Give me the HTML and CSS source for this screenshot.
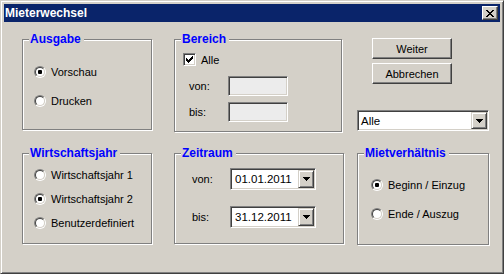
FILE: index.html
```html
<!DOCTYPE html>
<html>
<head>
<meta charset="utf-8">
<title>Mieterwechsel</title>
<link rel="stylesheet" href="styles.css">
</head>
<body>
<div class="window">
  <div class="titlebar">
    <span class="title">Mieterwechsel</span>
    <span class="close"><svg width="8" height="7" viewBox="0 0 8 7" shape-rendering="crispEdges"><path d="M0 0.5h2M6 0.5h2M1 1.5h2M5 1.5h2M2 2.5h4M3 3.5h2M2 4.5h4M1 5.5h2M5 5.5h2M0 6.5h2M6 6.5h2" stroke="#000" stroke-width="1"/></svg></span>
  </div>
  <div class="body">
    <div class="group g-ausgabe">
      <span class="legend">Ausgabe</span>
      <div class="opt"><span class="radio"><span class="radio-in"><span class="dot"></span></span></span><span>Vorschau</span></div>
      <div class="opt"><span class="radio"><span class="radio-in"></span></span><span>Drucken</span></div>
    </div>

    <div class="group g-bereich">
      <span class="legend">Bereich</span>
      <div class="chk-row"><span class="chk sunken"><svg width="7" height="7" viewBox="0 0 7 7" shape-rendering="crispEdges"><path d="M0.5 2v3M1.5 3v3M2.5 4v3M3.5 3v3M4.5 2v3M5.5 1v3M6.5 0v3" stroke="#000" stroke-width="1"/></svg></span><span>Alle</span></div>
      <div class="field"><span class="lbl">von:</span><span class="edit sunken"></span></div>
      <div class="field"><span class="lbl">bis:</span><span class="edit sunken"></span></div>
    </div>

    <div class="side">
      <div class="btn">Weiter</div>
      <div class="btn">Abbrechen</div>
      <div class="combo combo-wide sunken"><span class="combo-text">Alle</span><span class="dd"><svg width="7" height="4" viewBox="0 0 7 4" shape-rendering="crispEdges"><path d="M0 0.5h7M1 1.5h5M2 2.5h3M3 3.5h1" stroke="#000"/></svg></span></div>
    </div>

    <div class="group g-wj">
      <span class="legend">Wirtschaftsjahr</span>
      <div class="opt"><span class="radio"><span class="radio-in"></span></span><span>Wirtschaftsjahr 1</span></div>
      <div class="opt"><span class="radio"><span class="radio-in"><span class="dot"></span></span></span><span>Wirtschaftsjahr 2</span></div>
      <div class="opt"><span class="radio"><span class="radio-in"></span></span><span>Benutzerdefiniert</span></div>
    </div>

    <div class="group g-zeit">
      <span class="legend">Zeitraum</span>
      <div class="dfield"><span class="dlbl">von:</span><span class="combo combo-date sunken"><span class="combo-text">01.01.2011</span><span class="dd"><svg width="7" height="4" viewBox="0 0 7 4" shape-rendering="crispEdges"><path d="M0 0.5h7M1 1.5h5M2 2.5h3M3 3.5h1" stroke="#000"/></svg></span></span></div>
      <div class="dfield"><span class="dlbl">bis:</span><span class="combo combo-date sunken"><span class="combo-text">31.12.2011</span><span class="dd"><svg width="7" height="4" viewBox="0 0 7 4" shape-rendering="crispEdges"><path d="M0 0.5h7M1 1.5h5M2 2.5h3M3 3.5h1" stroke="#000"/></svg></span></span></div>
    </div>

    <div class="group g-miet">
      <span class="legend">Mietverhältnis</span>
      <div class="opt"><span class="radio"><span class="radio-in"><span class="dot"></span></span></span><span>Beginn / Einzug</span></div>
      <div class="opt"><span class="radio"><span class="radio-in"></span></span><span>Ende / Auszug</span></div>
    </div>
  </div>
</div>
</body>
</html>
```

FILE: styles.css
```css
html, body {
  margin: 0;
  padding: 0;
  background: #D4D0C8;
}
body {
  font-family: "Liberation Sans", Arial, sans-serif;
  font-size: 11px;
  color: #000;
}
.window {
  width: 504px;
  height: 274px;
  box-sizing: border-box;
  border: 1px solid;
  border-color: #D4D0C8 #404040 #404040 #D4D0C8;
  box-shadow: inset 1px 1px #fff, inset -1px -1px #808080;
  padding: 3px;
  background: #D4D0C8;
  display: flex;
  flex-direction: column;
}
.titlebar {
  height: 18px;
  flex: none;
  background: #0A246A;
  display: flex;
  align-items: center;
  justify-content: space-between;
  padding-left: 1px;
}
.title {
  color: #fff;
  font-weight: bold;
  font-size: 12px;
  line-height: 14px;
}
.close {
  width: 16px;
  height: 14px;
  box-sizing: border-box;
  margin-right: 2px;
  background: #D4D0C8;
  border: 1px solid;
  border-color: #fff #404040 #404040 #fff;
  box-shadow: inset -1px -1px #808080;
  display: flex;
  align-items: center;
  justify-content: center;
}
.close svg { display: block; }

.body {
  flex: 1;
  display: grid;
  grid-template-columns: 152px 183px 132px;
  grid-template-rows: 93px 92px;
  row-gap: 21px;
  padding: 17px 0 0 18px;
  align-items: start;
}

.group {
  position: relative;
  box-sizing: border-box;
  border: 1px solid #808080;
  box-shadow: inset 1px 1px #fff, 1px 1px #fff;
  display: flex;
  flex-direction: column;
  align-items: flex-start;
}
.legend {
  position: absolute;
  top: -8px;
  left: 6px;
  padding: 0 3px 0 1px;
  background: #D4D0C8;
  color: #0000FF;
  font-weight: bold;
  font-size: 12px;
  line-height: 14px;
  white-space: nowrap;
}

.g-ausgabe { width: 130px; height: 91px; padding: 23px 0 0 11px; gap: 12px; }
.g-bereich { width: 168px; height: 93px; padding: 13px 0 0 8px; }
.g-wj { width: 130px; height: 91px; padding: 12px 0 0 11px; gap: 7px; }
.g-zeit { width: 170px; height: 91px; padding: 14px 0 0 17px; gap: 16px; }
.g-miet { width: 132px; height: 92px; padding: 22px 0 0 13px; gap: 12px; }

.opt {
  display: flex;
  align-items: center;
  height: 17px;
  gap: 5px;
  white-space: nowrap;
}
.radio {
  width: 12px;
  height: 12px;
  box-sizing: border-box;
  border-radius: 50%;
  border: 1px solid;
  border-color: #808080 #fff #fff #808080;
  flex: none;
  display: flex;
}
.radio-in {
  flex: 1;
  border-radius: 50%;
  border: 1px solid;
  border-color: #404040 #D4D0C8 #D4D0C8 #404040;
  background: #fff;
  display: flex;
  align-items: center;
  justify-content: center;
}
.dot {
  width: 4px;
  height: 4px;
  border-radius: 1px;
  background: #000;
}

.sunken {
  box-sizing: border-box;
  border: 1px solid;
  border-color: #808080 #fff #fff #808080;
  box-shadow: inset 1px 1px #404040, inset -1px -1px #D4D0C8;
}
.chk-row {
  display: flex;
  align-items: center;
  height: 13px;
  gap: 5px;
}
.chk {
  width: 13px;
  height: 13px;
  background: #fff;
  display: flex;
  align-items: center;
  justify-content: center;
  flex: none;
}
.chk svg { display: block; }

.field {
  display: flex;
  align-items: center;
  margin-left: 6px;
  margin-top: 10px;
}
.field + .field { margin-top: 6px; }
.lbl { width: 39px; }
.edit {
  width: 60px;
  height: 20px;
  background: #ECECEC;
}

.side {
  display: flex;
  flex-direction: column;
  align-items: flex-start;
  margin-top: -1px;
}
.btn {
  width: 80px;
  height: 21px;
  margin-left: 15px;
  box-sizing: border-box;
  border: 1px solid;
  border-color: #fff #404040 #404040 #fff;
  box-shadow: inset -1px -1px #808080;
  display: flex;
  align-items: center;
  justify-content: center;
}
.btn + .btn { margin-top: 4px; }

.combo {
  display: flex;
  align-items: stretch;
  padding: 1px;
  background: #fff;
}
.combo-wide {
  width: 132px;
  height: 21px;
  margin-top: 26px;
}
.combo-date {
  width: 86px;
  height: 22px;
}
.combo-text {
  flex: 1;
  display: flex;
  align-items: center;
  padding-left: 3px;
  font-size: 11.5px;
}
.combo-wide .combo-text { padding-left: 2px; }
.dd {
  width: 16px;
  box-sizing: border-box;
  background: #D4D0C8;
  border: 1px solid;
  border-color: #D4D0C8 #404040 #404040 #D4D0C8;
  box-shadow: inset 1px 1px #fff, inset -1px -1px #808080;
  display: flex;
  align-items: center;
  justify-content: center;
}
.dd svg { display: block; }

.dfield {
  display: flex;
  align-items: center;
}
.dlbl { width: 38px; }
```
